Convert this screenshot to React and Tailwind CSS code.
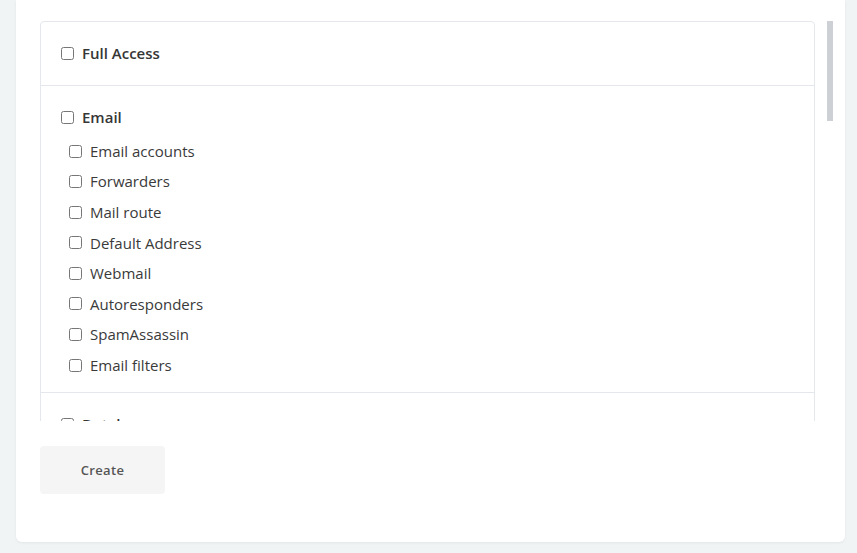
import React from 'react';

const EMAIL_ITEMS = [
  'Email accounts',
  'Forwarders',
  'Mail route',
  'Default Address',
  'Webmail',
  'Autoresponders',
  'SpamAssassin',
  'Email filters'
];

const DB_ITEMS = ['MySQL Databases', 'phpMyAdmin', 'Remote MySQL'];

function Section({ title, items, last }) {
  return (
    <div className={'px-5 pt-5 ' + (items ? 'pb-4 ' : 'pb-[21px] ') + (last ? '' : 'border-b border-[#e4e7ec]')}>
      <label className="flex h-[22px] items-center gap-2">
        <input type="checkbox" className="h-[13px] w-[13px]" />
        <span className="text-[15px] font-semibold text-[#363636]">{title}</span>
      </label>
      {items && (
        <div className="mt-3 flex flex-col gap-[8.6px] pl-2">
          {items.map((item) => (
            <label key={item} className="flex h-[22px] items-center gap-2">
              <input type="checkbox" className="h-[13px] w-[13px]" />
              <span className="text-[15px] text-[#3a3a3a]">{item}</span>
            </label>
          ))}
        </div>
      )}
    </div>
  );
}

export default function App() {
  return (
    <div
      className="h-[553px] w-[857px] overflow-hidden bg-[#f1f4f5]"
      style={{ fontFamily: '"Open Sans", "Liberation Sans", sans-serif' }}
    >
      <div className="ml-4 w-[829px] rounded-b-md bg-white pl-6 pr-3 pt-[21px] pb-12 shadow-[0_1px_3px_rgba(0,0,0,0.06)]">
        <div className="flex">
          <div className="h-[400px] w-[775px] shrink-0 overflow-hidden">
            <div className="rounded-t border border-[#e4e7ec]">
              <Section title="Full Access" />
              <Section title="Email" items={EMAIL_ITEMS} />
              <Section title="Databases" items={DB_ITEMS} last />
            </div>
          </div>
          <div className="ml-3 h-[400px] w-[6px] shrink-0">
            <div className="h-[100px] w-full bg-[#cdd1d6]" />
          </div>
        </div>
        <button className="mt-[25px] h-12 w-[125px] rounded bg-[#f5f5f5] pt-px text-[13px] font-semibold tracking-wide text-[#555]">
          Create
        </button>
      </div>
    </div>
  );
}
